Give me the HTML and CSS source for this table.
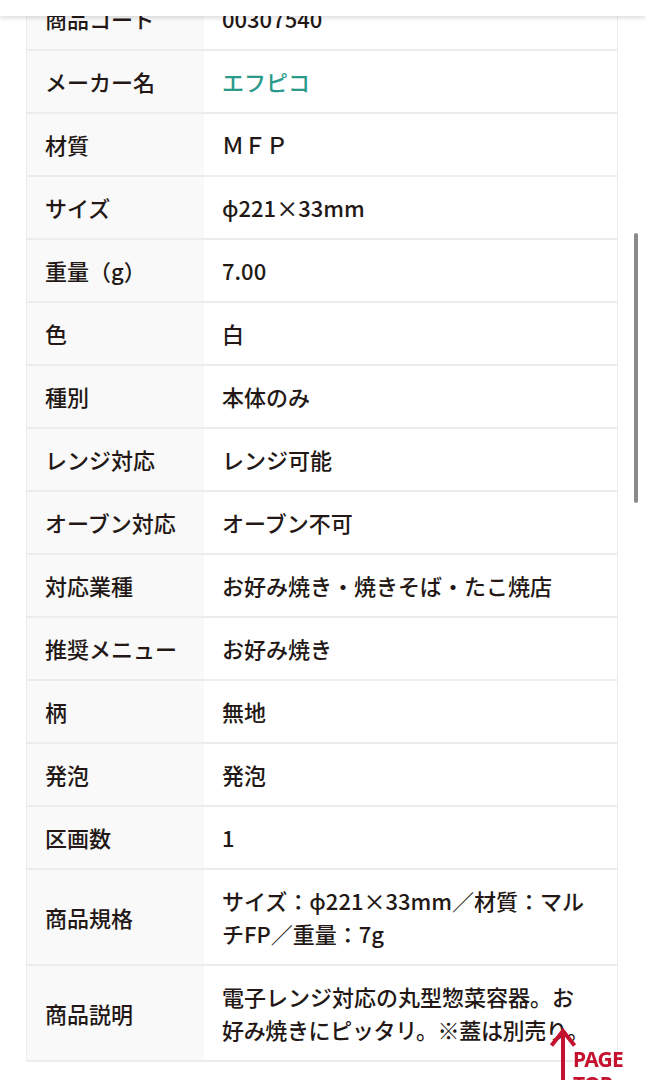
FILE: index.html
```html
<!DOCTYPE html>
<html lang="ja">
<head>
<meta charset="utf-8">
<title>商品詳細</title>
<link rel="stylesheet" href="styles.css">
</head>
<body>
<header class="topbar"></header>
<main class="page">
  <div class="spec">
    <div class="row"><div class="label">商品コード</div><div class="value">00307540</div></div>
    <div class="row"><div class="label">メーカー名</div><div class="value"><a class="maker" href="#">エフピコ</a></div></div>
    <div class="row"><div class="label">材質</div><div class="value">ＭＦＰ</div></div>
    <div class="row"><div class="label">サイズ</div><div class="value">ϕ221×33mm</div></div>
    <div class="row"><div class="label">重量（g）</div><div class="value">7.00</div></div>
    <div class="row"><div class="label">色</div><div class="value">白</div></div>
    <div class="row"><div class="label">種別</div><div class="value">本体のみ</div></div>
    <div class="row"><div class="label">レンジ対応</div><div class="value">レンジ可能</div></div>
    <div class="row"><div class="label">オーブン対応</div><div class="value">オーブン不可</div></div>
    <div class="row"><div class="label">対応業種</div><div class="value">お好み焼き・焼きそば・たこ焼店</div></div>
    <div class="row"><div class="label">推奨メニュー</div><div class="value">お好み焼き</div></div>
    <div class="row"><div class="label">柄</div><div class="value">無地</div></div>
    <div class="row"><div class="label">発泡</div><div class="value">発泡</div></div>
    <div class="row"><div class="label">区画数</div><div class="value">1</div></div>
    <div class="row"><div class="label">商品規格</div><div class="value">サイズ：ϕ221×33mm／材質：マルチFP／重量：7g</div></div>
    <div class="row"><div class="label">商品説明</div><div class="value nowrap">電子レンジ対応の丸型惣菜容器。お<br><span class="tight">好み焼きにピッタリ。※蓋は別売り。</span></div></div>
  </div>
</main>
<div class="scrollbar"></div>
<a class="pagetop" href="#">
  <svg class="pagetop-arrow" width="30" height="60" viewBox="0 0 30 60" aria-hidden="true">
    <path d="M14 5 V60" stroke="#c4122f" stroke-width="4" fill="none"/>
    <path d="M2.5 19.5 L14 5 L25.5 19.5" stroke="#c4122f" stroke-width="4" fill="none" stroke-linejoin="miter"/>
  </svg>
  <span class="pagetop-text">PAGE<br>TOP</span>
</a>
</body>
</html>
```

FILE: styles.css
```css
html, body {
  margin: 0;
  padding: 0;
  background: #ffffff;
}

body {
  font-family: "Noto Sans CJK JP", "Noto Sans", sans-serif;
  color: #231815;
  overflow: hidden;
  height: 1080px;
}

.topbar {
  position: fixed;
  top: 0;
  left: 0;
  right: 0;
  height: 16px;
  background: #ffffff;
  box-shadow: 0 2px 5px rgba(0, 0, 0, 0.14);
  z-index: 10;
}

.page {
  padding-left: 26px;
  margin-top: -12px;
}

.spec {
  width: 590px;
  border-left: 1px solid #ededed;
  border-right: 1px solid #ededed;
}

.row {
  display: grid;
  grid-template-columns: 177px 1fr;
  border-bottom: 2px solid #ececec;
}

.label,
.value {
  font-size: 22px;
  font-weight: 500;
  line-height: 33px;
  padding: 14px 18px;
}

.label {
  background: #f9f9f9;
  display: flex;
  align-items: center;
}

.value {
  background: #ffffff;
  padding-right: 24px;
}

.nowrap {
  white-space: nowrap;
}

.tight {
  letter-spacing: -0.35px;
}

.maker {
  color: #2a9a8a;
  text-decoration: none;
}

.scrollbar {
  position: fixed;
  top: 233px;
  left: 634px;
  width: 4px;
  height: 270px;
  border-radius: 3px;
  background: #8a8a8a;
}

.pagetop {
  position: fixed;
  left: 549px;
  top: 1026px;
  display: block;
  width: 97px;
  height: 60px;
  text-decoration: none;
  z-index: 5;
}

.pagetop-arrow {
  position: absolute;
  left: 0;
  top: 0;
}

.pagetop-text {
  position: absolute;
  left: 24px;
  top: 21px;
  font-family: "Noto Sans", sans-serif;
  font-weight: 700;
  font-size: 21px;
  line-height: 25px;
  color: #c4122f;
  letter-spacing: -0.8px;
}
```
